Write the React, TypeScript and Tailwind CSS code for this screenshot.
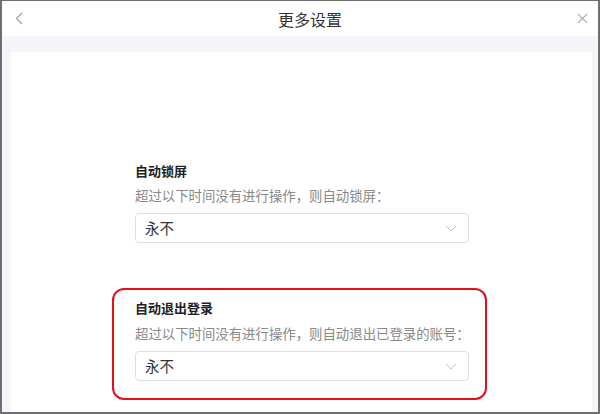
import React from "react";

const font = { fontFamily: '"Noto Sans CJK SC", "Noto Sans", sans-serif' };

function Chevron() {
  return (
    <svg width="12" height="7" viewBox="0 0 12 7" fill="none">
      <path d="M1 1l5 5 5-5" stroke="#c0c4cc" strokeWidth="1" />
    </svg>
  );
}

function Select() {
  return (
    <div className="flex h-[30px] w-[334px] items-center justify-between rounded-[4px] border border-[#dcdfe6] bg-white pl-[9px] pr-[11px]">
      <span className="text-[14.5px] leading-none text-[#333]">永不</span>
      <Chevron />
    </div>
  );
}

export default function App() {
  return (
    <div
      style={font}
      className="flex h-[414px] w-[600px] flex-col overflow-hidden border-x-2 border-b-2 border-t border-[#6f6f6f] bg-[#f4f5f9]"
    >
      <div className="flex h-[35px] shrink-0 items-center justify-between bg-white px-[13px]">
        <svg width="8" height="13" viewBox="0 0 8 13" fill="none">
          <path d="M7 1L1.5 6.5 7 12" stroke="#a0a0a0" strokeWidth="1.2" />
        </svg>
        <span className="ml-[20px] text-[16px] text-[#333]">更多设置</span>
        <svg width="11" height="11" viewBox="0 0 11 11" fill="none" className="mr-[-3px]">
          <path d="M1 1l9 9M10 1l-9 9" stroke="#b0b0b0" strokeWidth="1.1" />
        </svg>
      </div>
      <div className="flex-1 pl-[9px] pr-[6px] pt-[16px]">
        <div className="h-full bg-white pt-[109px]">
          <div className="pl-[124px]">
            <div className="text-[13px] font-bold leading-[20px] text-[#222]">自动锁屏</div>
            <div className="mt-[4px] text-[13.4px] leading-[20px] text-[#888]">
              超过以下时间没有进行操作，则自动锁屏：
            </div>
            <div className="mt-[8px]">
              <Select />
            </div>
          </div>
          <div className="ml-[101px] mt-[45px] w-[375px] rounded-[12px] border-2 border-[#e3101c] pb-[17px] pl-[21px] pt-[8px]">
            <div className="text-[13px] font-bold leading-[20px] text-[#222]">自动退出登录</div>
            <div className="mt-[5px] text-[13.4px] leading-[20px] text-[#888]">
              超过以下时间没有进行操作，则自动退出已登录的账号：
            </div>
            <div className="mt-[8px]">
              <Select />
            </div>
          </div>
        </div>
      </div>
    </div>
  );
}
